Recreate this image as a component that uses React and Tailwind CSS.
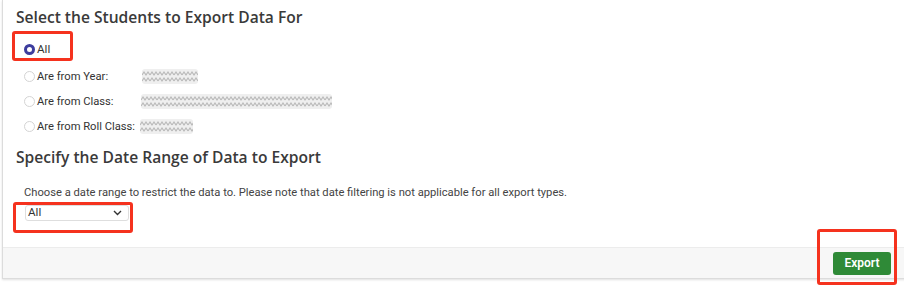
import React from "react";

const Redacted = ({ width }) => (
  <div className={`h-[15px] shrink-0 rounded-[3px] bg-[#efefef] overflow-hidden ${width}`}>
    <svg width="100%" height="15">
      <defs>
        <pattern id="zig" width="8" height="15" patternUnits="userSpaceOnUse">
          <path d="M0 6 L2 3 L4 6 L6 3 L8 6" fill="none" stroke="#b9b9b9" strokeWidth="1.2" />
          <path d="M0 12 L2 9 L4 12 L6 9 L8 12" fill="none" stroke="#b9b9b9" strokeWidth="1.2" />
        </pattern>
      </defs>
      <rect width="100%" height="15" fill="url(#zig)" />
    </svg>
  </div>
);

const Radio = ({ checked }) =>
  checked ? (
    <span className="inline-block h-[11px] w-[11px] shrink-0 rounded-full border-[3px] border-[#3d3d9e] bg-white" />
  ) : (
    <span className="inline-block h-[11px] w-[11px] shrink-0 rounded-full border border-[#d4d4d4] bg-white" />
  );

const options = [
  { label: "Are from Year:", box: "w-[56px]", col: "w-[118px]" },
  { label: "Are from Class:", box: "w-[191px]", col: "w-[117px]" },
  { label: "Are from Roll Class:", box: "w-[53px]", col: "w-[116px]" },
];

const App = () => {
  return (
    <div className="relative h-[300px] w-[904px] overflow-hidden bg-white font-['Roboto',sans-serif] text-[#333]">
      <div className="ml-[2px] w-[920px] border-x border-b border-[#dcdcdc] shadow-[0_1px_2px_rgba(0,0,0,0.12)]">
        <div className="px-[13px] pt-[7px]">
          <h2 className="font-['Open_Sans',sans-serif] text-[15.6px] font-semibold leading-[20px] text-[#3a3a3a]">
            Select the Students to Export Data For
          </h2>
          <div className="mt-[15px] flex items-center gap-[2px] pl-[8px] text-[11.6px] leading-[14px]">
            <Radio checked />
            <span>All</span>
          </div>
          <div className="mt-[13px] flex flex-col gap-[10px] pl-[8px]">
            {options.map((o) => (
              <div key={o.label} className="flex items-center text-[11.2px] leading-[15px]">
                <div className={`flex shrink-0 items-center gap-[2px] whitespace-nowrap ${o.col}`}>
                  <Radio />
                  <span>{o.label}</span>
                </div>
                <Redacted width={o.box} />
              </div>
            ))}
          </div>
          <h2 className="mt-[13px] font-['Open_Sans',sans-serif] text-[15.6px] font-semibold leading-[20px] text-[#3a3a3a]">
            Specify the Date Range of Data to Export
          </h2>
          <p className="mt-[19px] pl-[8px] text-[11.2px] leading-[14px] text-[#444]">
            Choose a date range to restrict the data to. Please note that date filtering is not applicable for all export types.
          </p>
          <div className="ml-[9px] mt-[5px] mb-[26px] flex h-[16px] w-[104px] items-center justify-between rounded-[3px] border border-[#dedede] px-[2px] text-[11.6px]">
            <span>All</span>
            <svg width="9" height="6" viewBox="0 0 9 6" className="mr-[4px]">
              <path d="M1 1 L4.5 4.5 L8 1" fill="none" stroke="#333" strokeWidth="1.4" />
            </svg>
          </div>
        </div>
        <div className="flex h-[31px] items-center border-t border-[#ececec] bg-[#f7f7f7] pl-[830px]">
          <button className="h-[23px] w-[58px] rounded-[3px] bg-[#2f8a37] text-[12px] font-semibold text-white">
            Export
          </button>
        </div>
      </div>

      <div className="absolute left-[12px] top-[31px] h-[30px] w-[61px] rounded-[3px] border-[3px] border-[#f5321e]" />
      <div className="absolute left-[13px] top-[202px] h-[31px] w-[120px] rounded-[3px] border-[3px] border-[#f5321e]" />
      <div className="absolute left-[817px] top-[229px] h-[56px] w-[80px] rounded-[3px] border-[3px] border-[#f5321e]" />
    </div>
  );
};

export default App;
